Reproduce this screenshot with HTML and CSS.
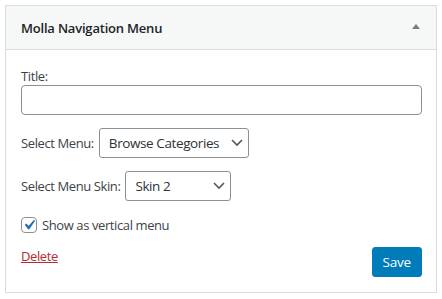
FILE: index.html
```html
<!DOCTYPE html>
<html lang="en">
  <head>
    <meta charset="UTF-8" />
    <meta name="viewport" content="width=device-width, initial-scale=1.0" />
    <title>Molla Navigation Menu</title>
    <link rel="stylesheet" href="styles.css">
  </head>
  <body>
    <div class="widget">
      <div class="widget_top">
        <h3 class="widget_title">Molla Navigation Menu</h3>
        <svg class="toggle_arrow" width="8" height="5" viewBox="0 0 8 5">
          <path d="M0 5 L4 0 L8 5 Z" fill="#787c82" />
        </svg>
      </div>
      <form class="widget_content">
        <p class="field field_title">
          <label for="title">Title:</label>
          <input id="title" class="text_input" type="text" />
        </p>
        <p class="field field_row">
          <label for="menu">Select Menu:</label>
          <span class="select_wrap select_menu">
            <select id="menu">
              <option>Browse Categories</option>
            </select>
            <svg class="chevron" width="14" height="14" viewBox="0 0 14 14">
              <path d="M2 5 L7 10 L12 5" fill="none" stroke="#50575e" stroke-width="1.6" />
            </svg>
          </span>
        </p>
        <p class="field field_row">
          <label for="skin">Select Menu Skin:</label>
          <span class="select_wrap select_skin">
            <select id="skin">
              <option>Skin 2</option>
            </select>
            <svg class="chevron" width="14" height="14" viewBox="0 0 14 14">
              <path d="M2 5 L7 10 L12 5" fill="none" stroke="#50575e" stroke-width="1.6" />
            </svg>
          </span>
        </p>
        <p class="field field_check">
          <span class="check_wrap">
            <input id="vertical" type="checkbox" checked />
            <svg class="checkmark" width="14" height="14" viewBox="0 0 20 20">
              <path d="M14.83 4.89l1.34.94-5.81 8.38H9.02L5.78 9.67l1.34-1.25 2.57 2.4z" fill="#2271b1" />
            </svg>
          </span>
          <label for="vertical">Show as vertical menu</label>
        </p>
        <div class="widget_actions">
          <a href="#" class="delete_link">Delete</a>
          <button type="button" class="save_button">Save</button>
        </div>
      </form>
    </div>
  </body>
</html>
```

FILE: styles.css
```css
body {
  margin: 5px;
  font-family: "Open Sans", "Noto Sans", sans-serif;
  font-size: 13px;
  letter-spacing: -0.4px;
  color: #3c434a;
  background-color: #fff;
}

.widget {
  width: 432px;
  box-sizing: border-box;
  border: 1px solid #dcdcde;
  background-color: #fff;
}

.widget_top {
  display: flex;
  align-items: center;
  justify-content: space-between;
  height: 43px;
  padding: 0 16px 0 15px;
  background-color: #f6f7f7;
  border-bottom: 1px solid #dcdcde;
}

.widget_title {
  margin: 0;
  font-size: 13px;
  font-weight: 600;
  letter-spacing: -0.2px;
  color: #1d2327;
}

.toggle_arrow {
  margin-top: -2px;
}

.widget_content {
  padding: 0 14px 15px 15px;
}

.field {
  margin: 13px 0 0;
}

.field_title {
  margin-top: 17px;
}

.field_title label {
  display: block;
  line-height: 18px;
}

.text_input {
  display: block;
  width: 100%;
  height: 30px;
  box-sizing: border-box;
  margin: 0;
  border: 1px solid #8c8f94;
  border-radius: 4px;
  background-color: #fff;
}

.field_row {
  display: flex;
  align-items: center;
  gap: 5px;
}

.select_wrap {
  position: relative;
  display: inline-block;
}

.select_wrap select {
  appearance: none;
  height: 30px;
  box-sizing: border-box;
  margin: 0;
  padding: 0 24px 0 9px;
  border: 1px solid #8c8f94;
  border-radius: 3px;
  background-color: #fff;
  font-family: inherit;
  font-size: 13.5px;
  letter-spacing: -0.4px;
  color: #2c3338;
}

.select_menu select {
  width: 150px;
}

.select_skin select {
  width: 106px;
}

.chevron {
  position: absolute;
  right: 5px;
  top: 7px;
  pointer-events: none;
}

.field_check {
  display: flex;
  align-items: center;
  gap: 5px;
  margin-top: 15px;
  line-height: 18px;
}

.check_wrap {
  position: relative;
  display: inline-block;
  width: 16px;
  height: 16px;
}

.check_wrap input {
  appearance: none;
  display: block;
  width: 16px;
  height: 16px;
  box-sizing: border-box;
  margin: 0;
  border: 1px solid #8c8f94;
  border-radius: 4px;
  background-color: #fff;
}

.checkmark {
  position: absolute;
  left: -1px;
  top: 0;
  width: 20px;
  height: 20px;
  margin: -2px 0 0 -1px;
  pointer-events: none;
}

.widget_actions {
  display: flex;
  align-items: flex-start;
  justify-content: space-between;
  margin-top: 13px;
}

.delete_link {
  line-height: 18px;
  color: #b32d2e;
  text-decoration: underline;
}

.save_button {
  height: 30px;
  padding: 0 10px;
  border: 1px solid #007cba;
  border-radius: 3px;
  background-color: #007cba;
  color: #fff;
  font-family: inherit;
  font-size: 13.5px;
  letter-spacing: -0.2px;
  cursor: pointer;
}
```
